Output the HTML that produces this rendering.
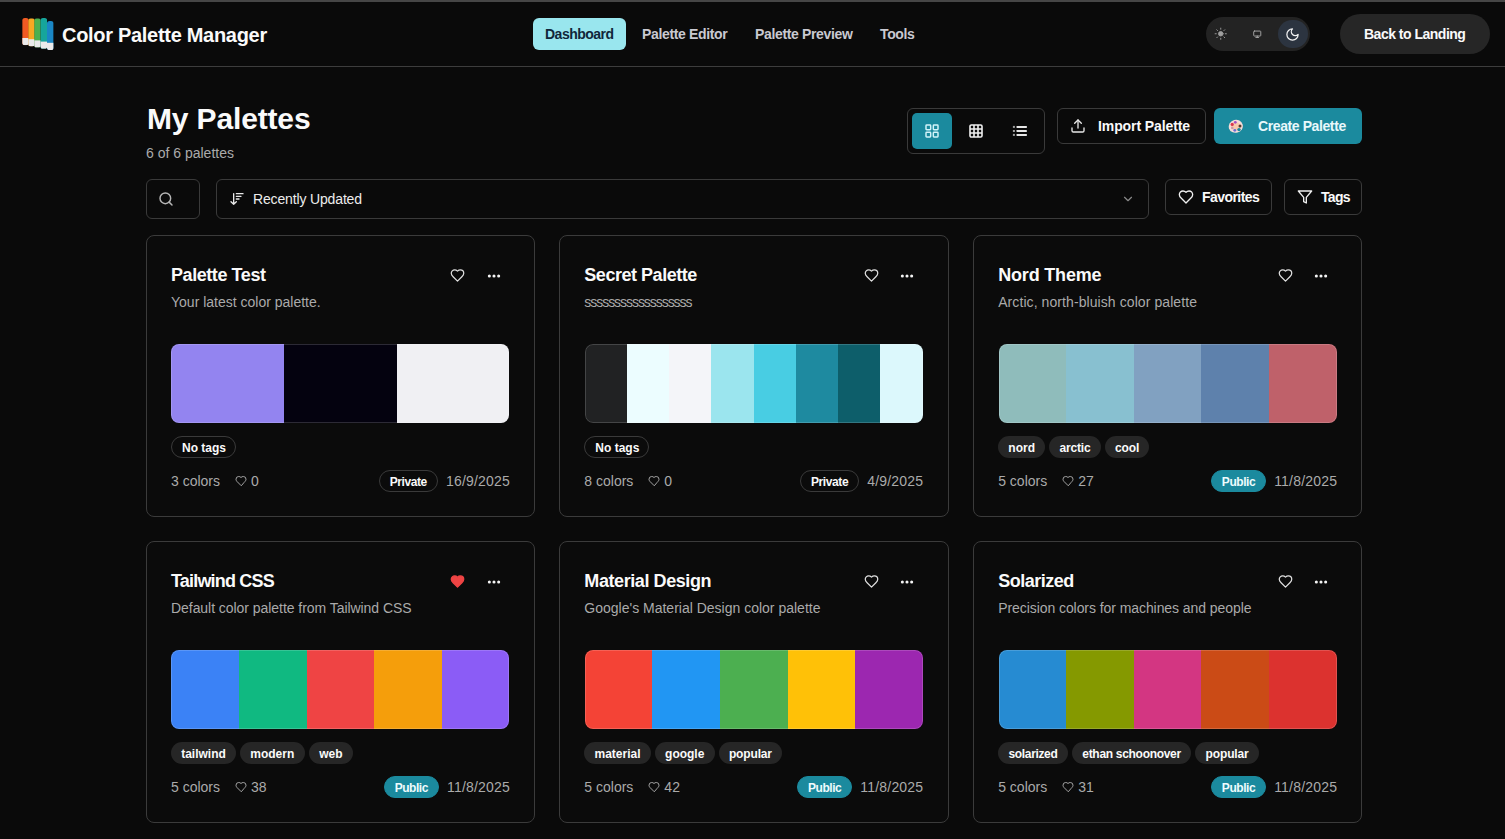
<!DOCTYPE html>
<html>
<head>
<meta charset="utf-8">
<style>
*{box-sizing:border-box;margin:0;padding:0}
html,body{width:1505px;height:839px;overflow:hidden;background:#0a0a0a;font-family:"Liberation Sans",sans-serif;color:#fafafa}
.abs{position:absolute}
.topbar{position:absolute;left:0;top:0;width:1505px;height:2px;background:#464646}
.hdr-line{position:absolute;left:0;top:66px;width:1505px;height:1px;background:#3d3d3d}
.b{font-weight:700}
svg{display:block}
.nav{position:absolute;top:18px;height:32px;line-height:32px;font-size:14px;font-weight:700;letter-spacing:-0.35px;color:#c9c9d1;white-space:nowrap}
.btn{position:absolute;display:flex;align-items:center;white-space:nowrap;font-size:14px;font-weight:700;letter-spacing:-0.35px}
.outline{border:1px solid #3a3a3a;border-radius:6px}
.card{position:absolute;width:389.33px;height:282px;border:1px solid #3b3b3b;border-radius:8px;background:#0b0b0b}
.card .t{position:absolute;left:24px;top:25px;height:28px;line-height:28px;font-size:18px;font-weight:700;letter-spacing:-0.6px;color:#fafafa;white-space:nowrap}
.card .d{position:absolute;left:24px;top:56px;height:20px;line-height:20px;font-size:14px;color:#aaaaaa;white-space:nowrap}
.card .heart{position:absolute;left:303.4px;top:31.8px;width:15px;height:15px}
.card .more{position:absolute;left:339px;top:32px;width:16px;height:16px}
.bar{position:absolute;left:24.4px;top:108.3px;width:338px;height:79.2px;border-radius:8px;overflow:hidden;display:flex}
.bar div{flex:1;height:100%}
.bar:after{content:"";position:absolute;inset:0;border:1px solid rgba(255,255,255,0.16);border-radius:8px}
.tags{position:absolute;left:24px;top:200px;height:22px;display:flex;gap:4px}
.tag{height:22px;line-height:24px;padding:0;text-align:center;border-radius:11px;background:#262626;font-size:12px;font-weight:700;letter-spacing:0;color:#fafafa;white-space:nowrap}
.tag.o{background:transparent;border:1px solid #3a3a3a;line-height:22px;padding:0 10px;width:65px}
.foot{position:absolute;left:24px;top:234px;width:339px;height:22px;display:flex;align-items:center;font-size:14px;color:#aaaaaa;white-space:nowrap}
.foot .cnt{margin-right:15px}
.foot .likes{display:flex;align-items:center;gap:4px}
.foot .sp{flex:1}
.foot .dt{letter-spacing:0.2px}
.badge{height:22px;line-height:22px;padding:0 10px;border-radius:11px;border:1px solid #3a3a3a;font-size:12px;font-weight:700;letter-spacing:-0.4px;color:#fafafa;margin-right:8px}
.badge.pub{background:#1b8a9e;border-color:#1b8a9e;color:#eefbfd;letter-spacing:-0.45px;padding:0 10px}
</style>
</head>
<body>
<div class="topbar"></div>
<div class="hdr-line"></div>

<!-- logo -->
<svg class="abs" style="left:22px;top:17px" width="33" height="34" viewBox="0 0 33 34"><defs><clipPath id="lc0"><rect x="0.2" y="1.0" width="6.6" height="27.2" rx="2.6"/></clipPath><clipPath id="lc1"><rect x="6.2" y="1.3" width="6.6" height="28.099999999999998" rx="2.6"/></clipPath><clipPath id="lc2"><rect x="12.2" y="1.3" width="6.6" height="29.3" rx="2.6"/></clipPath><clipPath id="lc3"><rect x="18.4" y="1.0" width="6.8" height="30.8" rx="2.6"/></clipPath><clipPath id="lc4"><rect x="25.0" y="4.0" width="6.6" height="29.0" rx="2.6"/></clipPath></defs><g clip-path="url(#lc0)"><rect x="0.2" y="1.0" width="6.6" height="27.2" fill="#f05a23"/><rect x="0.2" y="21.0" width="6.6" height="7.199999999999999" fill="#ebebeb"/></g><g clip-path="url(#lc1)"><rect x="6.2" y="1.3" width="6.6" height="28.099999999999998" fill="#f7a823"/><rect x="6.2" y="22.2" width="6.6" height="7.199999999999999" fill="#ebebeb"/></g><g clip-path="url(#lc2)"><rect x="12.2" y="1.3" width="6.6" height="29.3" fill="#4cb050"/><rect x="12.2" y="23.4" width="6.6" height="7.200000000000003" fill="#ebebeb"/></g><g clip-path="url(#lc3)"><rect x="18.4" y="1.0" width="6.8" height="30.8" fill="#16a59b"/><rect x="18.4" y="24.6" width="6.8" height="7.199999999999999" fill="#ebebeb"/></g><g clip-path="url(#lc4)"><rect x="25.0" y="4.0" width="6.6" height="29.0" fill="#1a86c4"/><rect x="25.0" y="25.8" width="6.6" height="7.199999999999999" fill="#ebebeb"/></g></svg>
<div class="abs b" style="left:62px;top:25px;height:20px;line-height:20px;font-size:20px;letter-spacing:-0.3px;color:#fafafa;white-space:nowrap">Color Palette Manager</div>

<!-- nav -->
<div class="abs" style="left:533px;top:18px;width:93px;height:32px;border-radius:6px;background:#99e6ee"></div>
<div class="nav" style="left:545px;color:#10263a;letter-spacing:-0.5px">Dashboard</div>
<div class="nav" style="left:642px">Palette Editor</div>
<div class="nav" style="left:755px">Palette Preview</div>
<div class="nav" style="left:880px">Tools</div>

<!-- theme toggle -->
<div class="abs" style="left:1206px;top:17px;width:104px;height:34px;border-radius:17px;background:#232323"></div>
<div class="abs" style="left:1278px;top:20px;width:30px;height:28px;border-radius:14px;background:#2c3440"></div>
<svg class="abs" style="left:1213.5px;top:27px" width="13.5" height="13.5" viewBox="0 0 24 24" fill="none" stroke="#9c9c9c" stroke-width="1.7" stroke-linecap="round"><circle cx="12" cy="12" r="4" fill="#a0a0a0"/><path d="M12 2v2M12 20v2M4.93 4.93l1.41 1.41M17.66 17.66l1.41 1.41M2 12h2M20 12h2M6.34 17.66l-1.41 1.41M19.07 4.93l-1.41 1.41"/></svg>
<svg class="abs" style="left:1253px;top:29.5px" width="8.5" height="8.5" viewBox="0 0 24 24" fill="none" stroke="#aaaaaa" stroke-width="2.6" stroke-linecap="round"><rect x="2" y="3" width="20" height="14" rx="2"/><path d="M8 21h8M12 17v4"/></svg>
<svg class="abs" style="left:1285px;top:27px" width="15" height="15" viewBox="0 0 24 24" fill="none" stroke="#f2f2f2" stroke-width="2" stroke-linecap="round" stroke-linejoin="round"><path d="M12 3a6 6 0 0 0 9 9 9 9 0 1 1-9-9Z"/></svg>

<!-- back to landing -->
<div class="abs" style="left:1340px;top:14px;width:150px;height:40px;border-radius:20px;background:#262626"></div>
<div class="abs b" style="left:1364px;top:14px;height:40px;line-height:40px;font-size:14px;letter-spacing:-0.5px;color:#fafafa;white-space:nowrap">Back to Landing</div>

<!-- page heading -->
<div class="abs b" style="left:147px;top:101px;height:36px;line-height:36px;font-size:30px;letter-spacing:-0.15px;color:#fafafa;white-space:nowrap">My Palettes</div>
<div class="abs" style="left:146px;top:143px;height:20px;line-height:20px;font-size:14px;color:#aaaaaa;white-space:nowrap">6 of 6 palettes</div>

<!-- view toggle -->
<div class="abs outline" style="left:907px;top:108px;width:138px;height:46px"></div>
<div class="abs" style="left:912px;top:113px;width:40px;height:36px;border-radius:5px;background:#1b8a9e"></div>
<svg class="abs" style="left:924px;top:123px" width="16" height="16" viewBox="0 0 24 24" fill="none" stroke="#d2f3f9" stroke-width="2.2" stroke-linejoin="round"><rect x="3" y="3" width="7" height="7" rx="1"/><rect x="14" y="3" width="7" height="7" rx="1"/><rect x="14" y="14" width="7" height="7" rx="1"/><rect x="3" y="14" width="7" height="7" rx="1"/></svg>
<svg class="abs" style="left:968px;top:123px" width="16" height="16" viewBox="0 0 24 24" fill="none" stroke="#f0f0f0" stroke-width="2.4" stroke-linejoin="round"><rect x="3" y="3" width="18" height="18" rx="2"/><path d="M3 9h18M3 15h18M9 3v18M15 3v18"/></svg>
<svg class="abs" style="left:1011px;top:123px" width="17" height="14" viewBox="0 0 17 14"><g fill="#a0a0a0"><rect x="1.9" y="2.9" width="2" height="2"/><rect x="1.9" y="7" width="2" height="2"/><rect x="1.9" y="10.9" width="2" height="2"/></g><g fill="#e6e6e6"><rect x="5.5" y="2.9" width="10.4" height="2" rx="0.4"/><rect x="5.5" y="7" width="10.4" height="2" rx="0.4"/><rect x="5.5" y="10.9" width="10.4" height="2" rx="0.4"/></g></svg>

<!-- import -->
<div class="abs outline" style="left:1057px;top:108px;width:149px;height:36px"></div>
<svg class="abs" style="left:1070px;top:118px" width="16" height="16" viewBox="0 0 24 24" fill="none" stroke="#e8e8e8" stroke-width="2" stroke-linecap="round" stroke-linejoin="round"><path d="M21 15v4a2 2 0 0 1-2 2H5a2 2 0 0 1-2-2v-4"/><polyline points="17 8 12 3 7 8"/><line x1="12" y1="3" x2="12" y2="15"/></svg>
<div class="abs b" style="left:1098px;top:108px;height:36px;line-height:36px;font-size:14px;letter-spacing:-0.1px;color:#fafafa;white-space:nowrap">Import Palette</div>

<!-- create -->
<div class="abs" style="left:1214px;top:108px;width:148px;height:36px;border-radius:6px;background:#1b8a9e"></div>
<svg class="abs" style="left:1228px;top:119px" width="16" height="15" viewBox="0 0 16 15"><ellipse cx="7.8" cy="7.3" rx="7.1" ry="6.5" transform="rotate(-15 7.8 7.3)" fill="#f6dcd8"/><ellipse cx="7.8" cy="7.2" rx="4.5" ry="4" fill="#f8c9ad"/><circle cx="11" cy="10.6" r="1.7" fill="#1b8a9e"/><circle cx="4.2" cy="5.4" r="1.6" fill="#d9364c"/><circle cx="7.3" cy="3.3" r="1.4" fill="#a54ec2"/><circle cx="12" cy="6.9" r="1.5" fill="#5b3b2c"/><circle cx="6.8" cy="11.3" r="1.4" fill="#6b6bd2"/><circle cx="4.3" cy="9" r="1.3" fill="#c99aa8"/></svg>
<div class="abs b" style="left:1258px;top:108px;height:36px;line-height:36px;font-size:14px;letter-spacing:-0.4px;color:#e8f8fb;white-space:nowrap">Create Palette</div>

<!-- search -->
<div class="abs outline" style="left:146px;top:179px;width:54px;height:40px"></div>
<svg class="abs" style="left:158px;top:191px" width="16" height="16" viewBox="0 0 24 24" fill="none" stroke="#b5b5b5" stroke-width="2.2" stroke-linecap="round"><circle cx="11" cy="11" r="8"/><path d="m21 21-4.3-4.3"/></svg>

<!-- sort select -->
<div class="abs outline" style="left:216px;top:179px;width:933px;height:40px"></div>
<svg class="abs" style="left:229px;top:191px" width="16" height="16" viewBox="0 0 24 24" fill="none" stroke="#e8e8e8" stroke-width="2" stroke-linecap="round" stroke-linejoin="round"><path d="m3 16 4 4 4-4M7 20V4M11 4h10M11 8h7M11 12h4"/></svg>
<div class="abs" style="left:253px;top:179px;height:40px;line-height:40px;font-size:14px;letter-spacing:-0.15px;color:#ededed;white-space:nowrap">Recently Updated</div>
<svg class="abs" style="left:1121px;top:192px" width="14" height="14" viewBox="0 0 24 24" fill="none" stroke="#8a8a8a" stroke-width="2" stroke-linecap="round" stroke-linejoin="round"><path d="m6 9 6 6 6-6"/></svg>

<!-- favorites -->
<div class="abs outline" style="left:1165px;top:179px;width:107px;height:36px"></div>
<svg class="abs" style="left:1178px;top:189px" width="16" height="16" viewBox="0 0 24 24" fill="none" stroke="#f0f0f0" stroke-width="2" stroke-linecap="round" stroke-linejoin="round"><path d="M19 14c1.49-1.46 3-3.21 3-5.5A5.5 5.5 0 0 0 16.5 3c-1.76 0-3 .5-4.5 2-1.5-1.5-2.74-2-4.5-2A5.5 5.5 0 0 0 2 8.5c0 2.3 1.5 4.05 3 5.5l7 7Z"/></svg>
<div class="abs b" style="left:1202px;top:179px;height:36px;line-height:36px;font-size:14px;letter-spacing:-0.55px;color:#fafafa;white-space:nowrap">Favorites</div>

<!-- tags -->
<div class="abs outline" style="left:1284px;top:179px;width:78px;height:36px"></div>
<svg class="abs" style="left:1297px;top:189px" width="16" height="16" viewBox="0 0 24 24" fill="none" stroke="#f0f0f0" stroke-width="2" stroke-linecap="round" stroke-linejoin="round"><polygon points="22 3 2 3 10 12.46 10 19 14 21 14 12.46 22 3"/></svg>
<div class="abs b" style="left:1321px;top:179px;height:36px;line-height:36px;font-size:14px;letter-spacing:-0.7px;color:#fafafa;white-space:nowrap">Tags</div>

<!-- CARDS -->
<div class="card" style="left:146px;top:235px">
<div class="t" style="letter-spacing:-0.43px">Palette Test</div>
<div class="d" style="letter-spacing:0px">Your latest color palette.</div>
<svg class="heart" viewBox="0 0 24 24" fill="none" stroke="#e0e0e0" stroke-width="2" stroke-linecap="round" stroke-linejoin="round"><path d="M19 14c1.49-1.46 3-3.21 3-5.5A5.5 5.5 0 0 0 16.5 3c-1.76 0-3 .5-4.5 2-1.5-1.5-2.74-2-4.5-2A5.5 5.5 0 0 0 2 8.5c0 2.3 1.5 4.05 3 5.5l7 7Z"/></svg>
<svg class="more" viewBox="0 0 24 24" fill="#f5f5f5"><circle cx="12" cy="12" r="2.3"/><circle cx="19" cy="12" r="2.3"/><circle cx="5" cy="12" r="2.3"/></svg>
<div class="bar"><div style="background:#9384f0"></div><div style="background:#04020f"></div><div style="background:#f0f0f3"></div></div>
<div class="tags"><span class="tag o">No tags</span></div>
<div class="foot"><span class="cnt">3 colors</span><span class="likes"><svg width="12" height="12" viewBox="0 0 24 24" fill="none" stroke="#a3a3a3" stroke-width="2" stroke-linecap="round" stroke-linejoin="round"><path d="M19 14c1.49-1.46 3-3.21 3-5.5A5.5 5.5 0 0 0 16.5 3c-1.76 0-3 .5-4.5 2-1.5-1.5-2.74-2-4.5-2A5.5 5.5 0 0 0 2 8.5c0 2.3 1.5 4.05 3 5.5l7 7Z"/></svg>0</span><span class="sp"></span><span class="badge">Private</span><span class="dt">16/9/2025</span></div>
</div>
<div class="card" style="left:559.33px;top:235px">
<div class="t" style="letter-spacing:-0.47px">Secret Palette</div>
<div class="d" style="letter-spacing:-1.05px">ssssssssssssssssss</div>
<svg class="heart" viewBox="0 0 24 24" fill="none" stroke="#e0e0e0" stroke-width="2" stroke-linecap="round" stroke-linejoin="round"><path d="M19 14c1.49-1.46 3-3.21 3-5.5A5.5 5.5 0 0 0 16.5 3c-1.76 0-3 .5-4.5 2-1.5-1.5-2.74-2-4.5-2A5.5 5.5 0 0 0 2 8.5c0 2.3 1.5 4.05 3 5.5l7 7Z"/></svg>
<svg class="more" viewBox="0 0 24 24" fill="#f5f5f5"><circle cx="12" cy="12" r="2.3"/><circle cx="19" cy="12" r="2.3"/><circle cx="5" cy="12" r="2.3"/></svg>
<div class="bar"><div style="background:#212223"></div><div style="background:#ecfdff"></div><div style="background:#f4f5f9"></div><div style="background:#9be5ee"></div><div style="background:#48cde3"></div><div style="background:#1e8aa0"></div><div style="background:#0d5e6a"></div><div style="background:#dcf8fc"></div></div>
<div class="tags"><span class="tag o">No tags</span></div>
<div class="foot"><span class="cnt">8 colors</span><span class="likes"><svg width="12" height="12" viewBox="0 0 24 24" fill="none" stroke="#a3a3a3" stroke-width="2" stroke-linecap="round" stroke-linejoin="round"><path d="M19 14c1.49-1.46 3-3.21 3-5.5A5.5 5.5 0 0 0 16.5 3c-1.76 0-3 .5-4.5 2-1.5-1.5-2.74-2-4.5-2A5.5 5.5 0 0 0 2 8.5c0 2.3 1.5 4.05 3 5.5l7 7Z"/></svg>0</span><span class="sp"></span><span class="badge">Private</span><span class="dt">4/9/2025</span></div>
</div>
<div class="card" style="left:973.2px;top:235px;width:388.8px">
<div class="t" style="letter-spacing:-0.18px">Nord Theme</div>
<div class="d" style="letter-spacing:0.08px">Arctic, north-bluish color palette</div>
<svg class="heart" viewBox="0 0 24 24" fill="none" stroke="#e0e0e0" stroke-width="2" stroke-linecap="round" stroke-linejoin="round"><path d="M19 14c1.49-1.46 3-3.21 3-5.5A5.5 5.5 0 0 0 16.5 3c-1.76 0-3 .5-4.5 2-1.5-1.5-2.74-2-4.5-2A5.5 5.5 0 0 0 2 8.5c0 2.3 1.5 4.05 3 5.5l7 7Z"/></svg>
<svg class="more" viewBox="0 0 24 24" fill="#f5f5f5"><circle cx="12" cy="12" r="2.3"/><circle cx="19" cy="12" r="2.3"/><circle cx="5" cy="12" r="2.3"/></svg>
<div class="bar"><div style="background:#8fbcbb"></div><div style="background:#88c0d0"></div><div style="background:#81a1c1"></div><div style="background:#5e81ac"></div><div style="background:#bf616a"></div></div>
<div class="tags"><span class="tag" style="width:47px;letter-spacing:0px">nord</span><span class="tag" style="width:51.5px;letter-spacing:-0.15px">arctic</span><span class="tag" style="width:44.8px;letter-spacing:-0.1px">cool</span></div>
<div class="foot"><span class="cnt">5 colors</span><span class="likes"><svg width="12" height="12" viewBox="0 0 24 24" fill="none" stroke="#a3a3a3" stroke-width="2" stroke-linecap="round" stroke-linejoin="round"><path d="M19 14c1.49-1.46 3-3.21 3-5.5A5.5 5.5 0 0 0 16.5 3c-1.76 0-3 .5-4.5 2-1.5-1.5-2.74-2-4.5-2A5.5 5.5 0 0 0 2 8.5c0 2.3 1.5 4.05 3 5.5l7 7Z"/></svg>27</span><span class="sp"></span><span class="badge pub">Public</span><span class="dt">11/8/2025</span></div>
</div>
<div class="card" style="left:146px;top:541px">
<div class="t" style="letter-spacing:-0.82px">Tailwind CSS</div>
<div class="d" style="letter-spacing:-0.05px">Default color palette from Tailwind CSS</div>
<svg class="heart" viewBox="0 0 24 24" fill="#ef4444" stroke="#ef4444" stroke-width="2" stroke-linecap="round" stroke-linejoin="round"><path d="M19 14c1.49-1.46 3-3.21 3-5.5A5.5 5.5 0 0 0 16.5 3c-1.76 0-3 .5-4.5 2-1.5-1.5-2.74-2-4.5-2A5.5 5.5 0 0 0 2 8.5c0 2.3 1.5 4.05 3 5.5l7 7Z"/></svg>
<svg class="more" viewBox="0 0 24 24" fill="#f5f5f5"><circle cx="12" cy="12" r="2.3"/><circle cx="19" cy="12" r="2.3"/><circle cx="5" cy="12" r="2.3"/></svg>
<div class="bar"><div style="background:#3b82f6"></div><div style="background:#10b981"></div><div style="background:#ef4444"></div><div style="background:#f59e0b"></div><div style="background:#8b5cf6"></div></div>
<div class="tags"><span class="tag" style="width:65px;letter-spacing:0px">tailwind</span><span class="tag" style="width:64.5px;letter-spacing:0px">modern</span><span class="tag" style="width:44.6px;letter-spacing:0px">web</span></div>
<div class="foot"><span class="cnt">5 colors</span><span class="likes"><svg width="12" height="12" viewBox="0 0 24 24" fill="none" stroke="#a3a3a3" stroke-width="2" stroke-linecap="round" stroke-linejoin="round"><path d="M19 14c1.49-1.46 3-3.21 3-5.5A5.5 5.5 0 0 0 16.5 3c-1.76 0-3 .5-4.5 2-1.5-1.5-2.74-2-4.5-2A5.5 5.5 0 0 0 2 8.5c0 2.3 1.5 4.05 3 5.5l7 7Z"/></svg>38</span><span class="sp"></span><span class="badge pub">Public</span><span class="dt">11/8/2025</span></div>
</div>
<div class="card" style="left:559.33px;top:541px">
<div class="t" style="letter-spacing:-0.42px">Material Design</div>
<div class="d" style="letter-spacing:0px">Google's Material Design color palette</div>
<svg class="heart" viewBox="0 0 24 24" fill="none" stroke="#e0e0e0" stroke-width="2" stroke-linecap="round" stroke-linejoin="round"><path d="M19 14c1.49-1.46 3-3.21 3-5.5A5.5 5.5 0 0 0 16.5 3c-1.76 0-3 .5-4.5 2-1.5-1.5-2.74-2-4.5-2A5.5 5.5 0 0 0 2 8.5c0 2.3 1.5 4.05 3 5.5l7 7Z"/></svg>
<svg class="more" viewBox="0 0 24 24" fill="#f5f5f5"><circle cx="12" cy="12" r="2.3"/><circle cx="19" cy="12" r="2.3"/><circle cx="5" cy="12" r="2.3"/></svg>
<div class="bar"><div style="background:#f44336"></div><div style="background:#2196f3"></div><div style="background:#4caf50"></div><div style="background:#ffc107"></div><div style="background:#9c27b0"></div></div>
<div class="tags"><span class="tag" style="width:66.4px;letter-spacing:0px">material</span><span class="tag" style="width:60px;letter-spacing:0px">google</span><span class="tag" style="width:63.4px;letter-spacing:-0.15px">popular</span></div>
<div class="foot"><span class="cnt">5 colors</span><span class="likes"><svg width="12" height="12" viewBox="0 0 24 24" fill="none" stroke="#a3a3a3" stroke-width="2" stroke-linecap="round" stroke-linejoin="round"><path d="M19 14c1.49-1.46 3-3.21 3-5.5A5.5 5.5 0 0 0 16.5 3c-1.76 0-3 .5-4.5 2-1.5-1.5-2.74-2-4.5-2A5.5 5.5 0 0 0 2 8.5c0 2.3 1.5 4.05 3 5.5l7 7Z"/></svg>42</span><span class="sp"></span><span class="badge pub">Public</span><span class="dt">11/8/2025</span></div>
</div>
<div class="card" style="left:973.2px;top:541px;width:388.8px">
<div class="t" style="letter-spacing:-0.5px">Solarized</div>
<div class="d" style="letter-spacing:-0.07px">Precision colors for machines and people</div>
<svg class="heart" viewBox="0 0 24 24" fill="none" stroke="#e0e0e0" stroke-width="2" stroke-linecap="round" stroke-linejoin="round"><path d="M19 14c1.49-1.46 3-3.21 3-5.5A5.5 5.5 0 0 0 16.5 3c-1.76 0-3 .5-4.5 2-1.5-1.5-2.74-2-4.5-2A5.5 5.5 0 0 0 2 8.5c0 2.3 1.5 4.05 3 5.5l7 7Z"/></svg>
<svg class="more" viewBox="0 0 24 24" fill="#f5f5f5"><circle cx="12" cy="12" r="2.3"/><circle cx="19" cy="12" r="2.3"/><circle cx="5" cy="12" r="2.3"/></svg>
<div class="bar"><div style="background:#268bd2"></div><div style="background:#859900"></div><div style="background:#d33682"></div><div style="background:#cb4b16"></div><div style="background:#dc322f"></div></div>
<div class="tags"><span class="tag" style="width:69.6px;letter-spacing:-0.35px">solarized</span><span class="tag" style="width:119.6px;letter-spacing:-0.3px">ethan schoonover</span><span class="tag" style="width:63.4px;letter-spacing:-0.15px">popular</span></div>
<div class="foot"><span class="cnt">5 colors</span><span class="likes"><svg width="12" height="12" viewBox="0 0 24 24" fill="none" stroke="#a3a3a3" stroke-width="2" stroke-linecap="round" stroke-linejoin="round"><path d="M19 14c1.49-1.46 3-3.21 3-5.5A5.5 5.5 0 0 0 16.5 3c-1.76 0-3 .5-4.5 2-1.5-1.5-2.74-2-4.5-2A5.5 5.5 0 0 0 2 8.5c0 2.3 1.5 4.05 3 5.5l7 7Z"/></svg>31</span><span class="sp"></span><span class="badge pub">Public</span><span class="dt">11/8/2025</span></div>
</div>

</body>
</html>
